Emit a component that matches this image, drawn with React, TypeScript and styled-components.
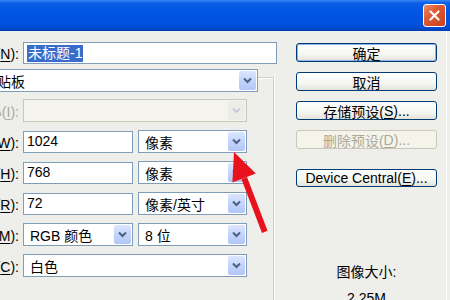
import React from "react";
import styled, { createGlobalStyle } from "styled-components";

const GlobalStyle = createGlobalStyle`
    html, body {
        margin: 0;
        padding: 0;
        width: 450px;
        height: 300px;
        overflow: hidden;
        background: #EEEEEA;
    }
`;

const FONT = `"Liberation Sans", "Noto Sans CJK SC", sans-serif`;

const Window = styled.div`
    width: 450px;
    height: 300px;
    overflow: hidden;
    font-family: ${FONT};
    font-size: 14px;
    color: #000;
`;

const TitleBar = styled.div`
    height: 31px;
    box-sizing: border-box;
    display: flex;
    align-items: center;
    justify-content: flex-end;
    padding-right: 4px;
    background: linear-gradient(to bottom, #3C86F2 0px, #0A5FE6 3px, #0055E3 12px, #0052DE 24px, #0047CC 29px, #003BB0 31px);
`;

const CloseButton = styled.div`
    width: 21px;
    height: 21px;
    border: 1px solid #fff;
    border-radius: 3px;
    display: flex;
    align-items: center;
    justify-content: center;
    background: linear-gradient(135deg, #EE8A68 0%, #DE5A34 40%, #C6401C 100%);
`;

const Body = styled.div`
    position: relative;
    display: flex;
    height: 269px;
    border-right: 1px solid #fff;
    margin-right: 3px;
`;

const LeftPanel = styled.div`
    flex: none;
    width: 367px;
    margin-left: -90px;
    padding-top: 11px;
    display: flex;
    flex-direction: column;
`;

const FieldRow = styled.div`
    display: flex;
    align-items: center;
    gap: 5px;
    height: 23px;
`;

const Label = styled.span<{ $disabled?: boolean }>`
    flex: none;
    box-sizing: border-box;
    width: 110px;
    margin-right: -2px;
    padding-right: 1px;
    text-align: right;
    white-space: nowrap;
    color: ${(p) => (p.$disabled ? "#ACA899" : "#000")};
    u {
        text-decoration: underline;
        text-underline-offset: 2px;
    }
`;

const TextInput = styled.div<{ $w: number }>`
    width: ${(p) => p.$w}px;
    height: 22px;
    box-sizing: border-box;
    border: 1px solid #7F9DB9;
    background: #fff;
    display: flex;
    align-items: center;
    padding-left: 3px;
    line-height: 17px;
`;

const Selected = styled.span`
    background: #3A6DCB;
    color: #fff;
    padding: 0 1px;
`;

const Select = styled.div<{ $w: number; $disabled?: boolean }>`
    flex: none;
    width: ${(p) => p.$w}px;
    height: 23px;
    box-sizing: border-box;
    border: 1px solid ${(p) => (p.$disabled ? "#C9C7BA" : "#7F9DB9")};
    background: ${(p) => (p.$disabled ? "#F4F3EE" : "#fff")};
    display: flex;
    align-items: center;
    padding: 1px;
    padding-left: 6px;
`;

const SelectValue = styled.span`
    flex: 1;
    white-space: nowrap;
    overflow: hidden;
`;

const DropButton = styled.div<{ $disabled?: boolean }>`
    flex: none;
    width: 17px;
    height: 19px;
    border-radius: 2px;
    display: flex;
    align-items: center;
    justify-content: center;
    background: ${(p) =>
        p.$disabled
            ? "#EDEDE8"
            : "linear-gradient(to bottom, #DCE6FD 0%, #C3D4FC 50%, #B2C6F6 100%)"};
`;

const GroupBox = styled.div`
    margin-top: 13px;
    width: 363px;
    height: 240px;
    border-top: 1px solid #D0D0C4;
    border-right: 1px solid #D0D0C4;
    box-shadow: inset 0 1px 0 #fff, 1px 0 0 #fff;
    display: flex;
    flex-direction: column;
    gap: 8px;
`;

const PresetSelect = styled(Select)`
    margin-top: -9px;
    margin-bottom: -1px;
    margin-left: 56px;
    padding-left: 16px;
`;

const RightPanel = styled.div`
    flex: 1;
    padding-top: 12px;
    padding-left: 19px;
    display: flex;
    flex-direction: column;
    align-items: flex-start;
    gap: 10px;
`;

const Button = styled.div<{ $default?: boolean; $disabled?: boolean }>`
    width: 141px;
    height: 19px;
    box-sizing: border-box;
    border: 1px solid ${(p) => (p.$disabled ? "#C9C7BA" : "#003C74")};
    border-radius: 3px;
    display: flex;
    align-items: center;
    justify-content: center;
    white-space: nowrap;
    color: ${(p) => (p.$disabled ? "#ACA899" : "#000")};
    background: ${(p) =>
        p.$disabled ? "#F5F4EA" : "linear-gradient(to bottom, #FFFFFF 0%, #F6F6F2 60%, #E4E3DA 100%)"};
    box-shadow: ${(p) => (p.$default ? "inset 0 0 0 1px #8EB0EC" : "none")};
    u {
        text-decoration: underline;
        text-underline-offset: 2px;
    }
`;

const Spacer = styled.div`
    height: 19px;
`;

const SizeInfo = styled.div`
    margin-top: 62px;
    width: 141px;
    text-align: center;
    line-height: 26px;
`;

const ArrowOverlay = styled.svg`
    position: absolute;
    left: 0;
    top: -31px;
    pointer-events: none;
`;

const Chevron = ({ disabled }: { disabled?: boolean }) => (
    <svg width="9" height="7" viewBox="0 0 9 7">
        <path d="M1 1.5 L4.5 5 L8 1.5" fill="none" stroke={disabled ? "#C6CCD8" : "#4D6185"} strokeWidth="2" />
    </svg>
);

const Dropdown = ({ w, value, disabled }: { w: number; value: string; disabled?: boolean }) => (
    <Select $w={w} $disabled={disabled}>
        <SelectValue>{value}</SelectValue>
        <DropButton $disabled={disabled}>
            <Chevron disabled={disabled} />
        </DropButton>
    </Select>
);

export default function App() {
    return (
        <Window>
            <GlobalStyle />
            <TitleBar>
                <CloseButton>
                    <svg width="11" height="11" viewBox="0 0 11 11">
                        <path d="M1.5 1.5 L9.5 9.5 M9.5 1.5 L1.5 9.5" stroke="#fff" strokeWidth="2.2" strokeLinecap="round" />
                    </svg>
                </CloseButton>
            </TitleBar>
            <Body>
                <LeftPanel>
                    <FieldRow>
                        <Label>名称(<u>N</u>):</Label>
                        <TextInput $w={254}>
                            <Selected>未标题-1</Selected>
                        </TextInput>
                    </FieldRow>
                    <GroupBox>
                        <PresetSelect $w={292}>
                            <SelectValue>剪贴板</SelectValue>
                            <DropButton>
                                <Chevron />
                            </DropButton>
                        </PresetSelect>
                        <FieldRow>
                            <Label $disabled>大小(<u>I</u>):</Label>
                            <Dropdown w={224} value="" disabled />
                        </FieldRow>
                        <FieldRow>
                            <Label>宽度(<u>W</u>):</Label>
                            <TextInput $w={110}>1024</TextInput>
                            <Dropdown w={109} value="像素" />
                        </FieldRow>
                        <FieldRow>
                            <Label>高度(<u>H</u>):</Label>
                            <TextInput $w={110}>768</TextInput>
                            <Dropdown w={109} value="像素" />
                        </FieldRow>
                        <FieldRow>
                            <Label>分辨率(<u>R</u>):</Label>
                            <TextInput $w={110}>72</TextInput>
                            <Dropdown w={109} value="像素/英寸" />
                        </FieldRow>
                        <FieldRow>
                            <Label>颜色模式(<u>M</u>):</Label>
                            <Dropdown w={110} value="RGB 颜色" />
                            <Dropdown w={109} value="8 位" />
                        </FieldRow>
                        <FieldRow>
                            <Label>背景内容(<u>C</u>):</Label>
                            <Dropdown w={224} value="白色" />
                        </FieldRow>
                    </GroupBox>
                </LeftPanel>
                <RightPanel>
                    <Button $default>确定</Button>
                    <Button>取消</Button>
                    <Button>存储预设(<u>S</u>)...</Button>
                    <Button $disabled>删除预设(<u>D</u>)...</Button>
                    <Spacer />
                    <Button>Device Central(<u>E</u>)...</Button>
                    <SizeInfo>
                        图像大小:
                        <br />
                        2.25M
                    </SizeInfo>
                </RightPanel>
                <ArrowOverlay width="450" height="300" viewBox="0 0 450 300">
                    <polygon points="234,152 255.8,173.6 232.4,182.6" fill="#E8121C" />
                    <polygon points="247,177 241.5,179.2 262,233 267.5,230.8" fill="#E8121C" />
                </ArrowOverlay>
            </Body>
        </Window>
    );
}
